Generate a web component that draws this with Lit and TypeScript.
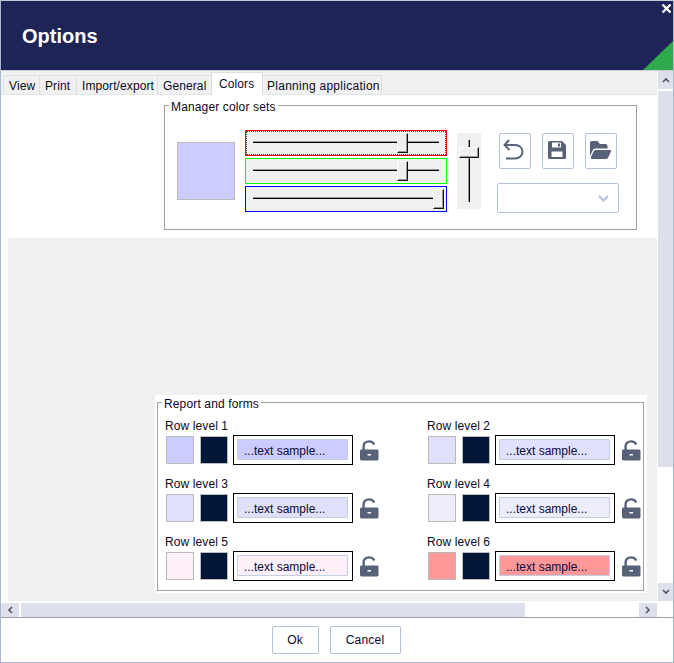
import { LitElement, html, css, svg } from "lit";
import { customElement } from "lit/decorators.js";

const lock = svg`<path d="M1.5 9.500h15.600a1.400 1.400 0 0 1 1.400 1.400v8.200a1.400 1.400 0 0 1-1.400 1.400H1.400A1.400 1.400 0 0 1 0 19.100v-8.200a1.400 1.400 0 0 1 1.400-1.400zM7.500 14v1.600h3.500V14z" fill="#576279" fill-rule="evenodd"/><path d="M3.600 10V6.200C3.600 3.300 6 1.400 9 1.400c2.400 0 4.400 1.200 5.200 3.100" fill="none" stroke="#576279" stroke-width="2.400"/>`;

const rows = [
  { n: 1, c: "#ccccff" },
  { n: 2, c: "#e0e0fa" },
  { n: 3, c: "#e0e0fa" },
  { n: 4, c: "#eeeefa" },
  { n: 5, c: "#fdf0f8" },
  { n: 6, c: "#ff9999" },
];
const sliders = [
  { k: "r", v: 151 },
  { k: "g", v: 151 },
  { k: "b", v: 187 },
];
const tabs = [
  { t: "View", w: 37 },
  { t: "Print", w: 38 },
  { t: "Import/export", w: 82 },
  { t: "General", w: 55 },
  { t: "Colors", w: 52 },
  { t: "Planning application", w: 120 },
];

@customElement("app-root")
export class AppRoot extends LitElement {
  static styles = css`
    :host { display: block; width: 674px; height: 663px; box-sizing: border-box; border: 1px solid #a9b8cc; border-top-color: #c3cad6; background: #fff; font: 12px "Liberation Sans", Arial, sans-serif; color: #0a0a23; overflow: hidden; position: relative; }
    .win { display: flex; flex-direction: column; height: 100%; }
    .head { height: 70px; flex: none; background: #1e2556; position: relative; display: flex; align-items: center; padding-left: 21px; box-sizing: border-box; border-bottom: 1px solid #c9ced8; }
    .head h1 { margin: 1px 0 0; font: bold 20px "Liberation Sans", Arial, sans-serif; color: #fff; }
    .close { position: absolute; right: 1px; top: 2px; }
    .corner { position: absolute; right: 0; bottom: 0; }
    .main { flex: none; height: 546px; display: grid; grid-template-columns: 656px 16px; grid-template-rows: 532px 14px; }
    .view { display: flex; flex-direction: column; overflow: hidden; }
    .tabs { height: 24px; flex: none; display: flex; align-items: flex-end; padding-left: 2px; border-bottom: 1px solid #e1e4e8; background: #f1f1f1; box-sizing: border-box; }
    .tab { height: 19px; box-sizing: border-box; padding: 2px 0 0 5px; border: 1px solid #e0e0e0; border-bottom: 0; margin-right: -1px; line-height: 16px; background: #f1f1f1; white-space: nowrap; letter-spacing: 0.1px; flex: none; }
    .tab.on { height: 23px; background: #fff; padding: 3px 0 0 7px; margin-bottom: -1px; }
    .tab.long { letter-spacing: 0.27px; padding-left: 4px; }
    .page { flex: 1; padding: 3px 0 2px 0; display: flex; flex-direction: column; min-height: 0; }
    fieldset { margin: 0; padding: 0; border: 1px solid #a0a0a0; min-width: 0; background: #fff; }
    legend { padding: 3px 2px 0; margin-left: 4px; line-height: 12px; letter-spacing: 0.14px; }
    .mgr { margin-left: 163px; width: 473px; height: 132px; box-sizing: border-box; flex: none; }
    .mgr-in { display: flex; align-items: flex-start; padding: 18px 0 0 12px; margin-top: -1px; }
    .preview { width: 58px; height: 58px; box-sizing: border-box; border: 1px solid #bbb; background: #ccf; margin: 12px 10px 0 0; }
    .sl-col { display: flex; flex-direction: column; gap: 2px; width: 202px; }
    .sl { height: 26px; box-sizing: border-box; border: 1px solid; background: #f0f0f0; position: relative; }
    .sl.r { border-color: #f00; outline: 1px dotted #444; outline-offset: -2px; }
    .sl.g { border-color: #0f0; }
    .sl.b { border-color: #00f; }
    .sl .track { position: absolute; left: 7px; right: 7px; top: 10px; height: 2px; background: linear-gradient(#999 0 1px, #000 1px); }
    .thumb { position: absolute; box-sizing: border-box; background: #f0f0f0; border-style: solid; border-width: 1px; border-color: #fff #111 #111 #fff; box-shadow: inset -1px -1px 0 #999; }
    .sl .thumb { top: 2px; width: 11px; height: 20px; }
    .vsl { width: 24px; height: 76px; margin: 3px 18px 0 10px; background: #f0f0f0; position: relative; flex: none; }
    .vsl .track { position: absolute; left: 11px; top: 7px; width: 2px; height: 62px; background: linear-gradient(90deg, #999 0 1px, #000 1px); }
    .vsl .thumb { left: 2px; top: 14px; width: 20px; height: 11px; }
    .tools { width: 122px; flex: none; margin-left: -2px; margin-top: 3px; }
    .btns { display: flex; gap: 11px; padding-left: 2px; }
    .ib { width: 32px; height: 36px; box-sizing: border-box; border: 1px solid #b3c2d6; border-radius: 2px; background: #fff; display: flex; align-items: center; justify-content: center; padding: 0; }
    .ic { margin: 0 2px 2px 0; }
    .select { margin-top: 14px; height: 30px; box-sizing: border-box; border: 1px solid #b3c2d6; border-radius: 2px; display: flex; align-items: center; justify-content: flex-end; padding-right: 9px; }
    .gray { flex: 1; margin: 8px 0 0 7px; width: 650px; background: #f0f0f0; position: relative; display: flex; align-items: flex-end; }
    .rpt-wrap { margin: 0 0 8px 147px; padding: 0 3px 0 2px; background: #fff; width: 492px; height: 198px; box-sizing: border-box; }
    .rpt { height: 196px; box-sizing: border-box; width: 487px; }
    .grid { display: grid; grid-template-columns: 262px 224px; grid-auto-rows: 58px; padding: 9px 0 0 7px; }
    .lvl { font-size: 12px; letter-spacing: 0.1px; line-height: 14px; margin-bottom: 2px; }
    .line { display: flex; align-items: flex-start; padding-left: 1px; }
    .sw { width: 28px; height: 28px; box-sizing: border-box; border: 1px solid #bbb; margin-top: 1px; }
    .sw.dark { background: #011738; margin-left: 6px; margin-right: 5px; }
    .sample { width: 120px; height: 30px; box-sizing: border-box; border: 1px solid #000; padding: 3px 4px 3px 3px; }
    .sample div { height: 21px; box-sizing: border-box; border: 1px solid #c3cfe0; border-radius: 1px; padding-left: 6px; line-height: 23px; color: #0a0a40; white-space: nowrap; }
    .lk { margin: 5px 0 0 7px; display: block; }
    .vbar { grid-row: 1; grid-column: 2; display: flex; flex-direction: column; padding: 0 0 2px 1px; }
    .sb { background: #dde0ea; display: flex; align-items: center; justify-content: center; flex: none; }
    .vbar .sb { width: 15px; height: 18px; }
    .vbar .fill { background: #dde0ea; height: 376px; margin-top: 2px; flex: none; width: 15px; }
    .vbar .sp { flex: 1; }
    .hbar { grid-row: 2; grid-column: 1; display: flex; }
    .hbar .sb { width: 18px; height: 14px; }
    .hbar .thumbh { width: 504px; height: 14px; margin-left: 2px; background: #dde0ea; flex: none; }
    .hbar .sp { flex: 1; }
    .corner-sb { grid-row: 2; grid-column: 2; background: #fff; }
    .foot { flex: 1; border-top: 1px solid #9aa0a8; display: flex; justify-content: center; gap: 11px; padding: 8px 2px 0 0; box-sizing: border-box; }
    .foot button { height: 28px; box-sizing: border-box; border: 1px solid #b3c2d6; border-radius: 2px; background: #fff; font: 12px "Liberation Sans", Arial, sans-serif; color: #0a0a23; padding: 0; letter-spacing: 0.2px; }
    .foot .ok { width: 47px; }
    .foot .cancel { width: 71px; }
  `;

  private chev(d: string, c = "#4d566c") {
    return html`<svg width="8" height="6" viewBox="0 0 8 6"><path d=${d} fill="none" stroke=${c} stroke-width="1.6"/></svg>`;
  }

  render() {
    return html`<div class="win">
      <div class="head">
        <h1>Options</h1>
        <svg class="close" width="11" height="11" viewBox="0 0 11 11"><path d="M1.500 1.500l8 8M9.500 1.500l-8 8" stroke="#fff" stroke-width="2.400"/></svg>
        <svg class="corner" width="30" height="29" viewBox="0 0 30 29"><path d="M30 0V29H0z" fill="#2eaa4c"/></svg>
      </div>
      <div class="main">
        <div class="view">
          <div class="tabs">${tabs.map((t) => html`<div class="tab ${t.t === "Colors" ? "on" : ""} ${t.w === 120 ? "long" : ""}" style="width:${t.w}px">${t.t}</div>`)}</div>
          <div class="page">
            <fieldset class="mgr">
              <legend>Manager color sets</legend>
              <div class="mgr-in">
                <div class="preview"></div>
                <div class="sl-col">
                  ${sliders.map((s) => html`<div class="sl ${s.k}"><div class="track"></div><div class="thumb" style="left:${s.v}px"></div></div>`)}
                </div>
                <div class="vsl"><div class="track"></div><div class="thumb"></div></div>
                <div class="tools">
                  <div class="btns">
                    <button class="ib"><svg width="26" height="24" viewBox="0 0 26 24"><path d="M7 1L2.500 6l5 5M3 6h10c4.300 0 7.500 2.800 7.500 6.700S17.300 19.500 13 19.500H4" fill="none" stroke="#576279" stroke-width="1.900"/></svg></button>
                    <button class="ib"><svg class="ic" width="18" height="18" viewBox="0 0 18 18"><path fill="#576279" fill-rule="evenodd" d="M1.500 0H14l4 4v12.500a1.500 1.500 0 0 1-1.500 1.500h-15A1.500 1.500 0 0 1 0 16.500v-15A1.500 1.500 0 0 1 1.500 0zM4 1.500V6.500H13V1.500zM10 2.500H12V5.500H10zM3.500 10.500V16H14.500V10.500z"/></svg></button>
                    <button class="ib"><svg class="ic" width="21" height="18" viewBox="0 64 576 384" preserveAspectRatio="none"><path fill="#576279" d="M572.694 292.093L500.270 416.248A63.997 63.997 0 0 1 444.989 448H45.025c-18.523 0-30.064-20.093-20.731-36.093l72.424-124.155A64 64 0 0 1 152 256h399.964c18.523 0 30.064 20.093 20.730 36.093zM152 224h328v-48c0-26.510-21.490-48-48-48H272l-64-64H48C21.490 64 0 85.490 0 112v278.046l69.077-118.418C86.214 242.250 117.989 224 152 224z"/></svg></button>
                  </div>
                  <div class="select"><svg width="11" height="7" viewBox="0 0 11 7"><path d="M1 1l4.500 4.500L10 1" fill="none" stroke="#b3c2d6" stroke-width="2.200"/></svg></div>
                </div>
              </div>
            </fieldset>
            <div class="gray">
              <div class="rpt-wrap">
                <fieldset class="rpt">
                  <legend>Report and forms</legend>
                  <div class="grid">
                    ${rows.map((r) => html`<div>
                      <div class="lvl">Row level ${r.n}</div>
                      <div class="line">
                        <div class="sw" style="background:${r.c}"></div>
                        <div class="sw dark"></div>
                        <div class="sample"><div style="background:${r.c}">...text sample...</div></div>
                        <svg class="lk" width="19" height="21" viewBox="0 0 19 21">${lock}</svg>
                      </div>
                    </div>`)}
                  </div>
                </fieldset>
              </div>
            </div>
          </div>
        </div>
        <div class="vbar">
          <div class="sb">${this.chev("M1 5l3-3 3 3")}</div>
          <div class="fill"></div>
          <div class="sp"></div>
          <div class="sb">${this.chev("M1 1l3 3 3-3")}</div>
        </div>
        <div class="hbar">
          <div class="sb"><svg width="6" height="8" viewBox="0 0 6 8"><path d="M5 1L2 4l3 3" fill="none" stroke="#4d566c" stroke-width="1.600"/></svg></div>
          <div class="thumbh"></div>
          <div class="sp"></div>
          <div class="sb"><svg width="6" height="8" viewBox="0 0 6 8"><path d="M1 1l3 3-3 3" fill="none" stroke="#4d566c" stroke-width="1.600"/></svg></div>
        </div>
        <div class="corner-sb"></div>
      </div>
      <div class="foot">
        <button class="ok">Ok</button>
        <button class="cancel">Cancel</button>
      </div>
    </div>`;
  }
}
